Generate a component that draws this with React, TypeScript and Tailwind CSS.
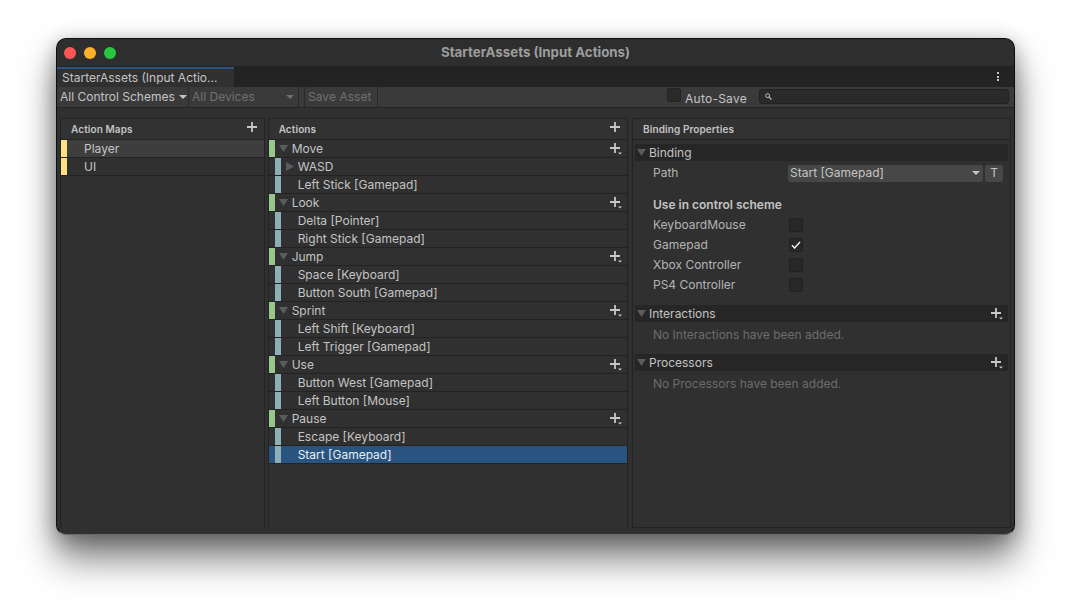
import React from "react";

const font = { fontFamily: "Inter, 'Liberation Sans', sans-serif" };

function Tri({ color = "#5c5c5c" }: { color?: string }) {
  return (
    <svg width="9" height="7" viewBox="0 0 9 7" className="shrink-0">
      <path d="M0 0H9L4.500 7Z" fill={color} />
    </svg>
  );
}

function TriRight() {
  return (
    <svg width="8" height="9" viewBox="0 0 8 9" className="shrink-0">
      <path d="M0 0V9L8 4.500Z" fill="#5c5c5c" />
    </svg>
  );
}

function DropTri({ color = "#c4c4c4", w = 8 }: { color?: string; w?: number }) {
  return (
    <svg width={w} height="4" viewBox="0 0 8 4" className="shrink-0" preserveAspectRatio="none">
      <path d="M0 0H8L4 4Z" fill={color} />
    </svg>
  );
}

function PlusMenu() {
  return (
    <svg width="12" height="12" viewBox="0 0 12 12" className="shrink-0">
      <path d="M5 0v10M0 5h10" stroke="#c8c8c8" strokeWidth="1.800" fill="none" />
      <path d="M8 9.500h4l-2 2z" fill="#c8c8c8" />
    </svg>
  );
}

function Plus() {
  return (
    <svg width="10" height="10" viewBox="0 0 10 10" className="shrink-0">
      <path d="M5 0v10M0 5h10" stroke="#c8c8c8" strokeWidth="1.800" fill="none" />
    </svg>
  );
}

function PanelHeader({ title, plus }: { title: string; plus?: boolean }) {
  return (
    <div className="h-[21px] shrink-0 flex items-center justify-between pl-[10px] pr-[7px] border-b border-[#232323] bg-[#323232]">
      <span className="text-[10px] font-semibold text-[#c4c4c4] tracking-[0.1px]">{title}</span>
      {plus && <div className="-mt-[4px]"><Plus /></div>}
    </div>
  );
}

function MapRow({ label, active }: { label: string; active?: boolean }) {
  return (
    <div className={`h-[18px] flex items-stretch border-b border-[#232323] ${active ? "bg-[#3e3e3e]" : ""}`}>
      <div className="w-[6px] bg-[#ffe083]" />
      <span className="ml-[17px] text-[12px] leading-[18px] text-[#c4c4c4]">{label}</span>
    </div>
  );
}

function ActionRow({ label }: { label: string }) {
  return (
    <div className="h-[18px] flex items-center border-b border-[#232323]">
      <div className="w-[6px] self-stretch bg-[#97c78b]" />
      <div className="ml-[4px] w-[9px] flex -mt-[1px]"><Tri /></div>
      <span className="ml-[4px] flex-1 text-[12px] text-[#c4c4c4]">{label}</span>
      <div className="mr-[5px] flex"><PlusMenu /></div>
    </div>
  );
}

function BindRow({ label, sel, arrow }: { label: string; sel?: boolean; arrow?: boolean }) {
  return (
    <div className={`h-[18px] flex items-center border-b border-[#232323] pl-[6px] ${sel ? "bg-[#2a5480]" : ""}`}>
      <div className="w-[6px] self-stretch bg-[#8cb0b6]" />
      <div className="w-[11px] pl-[5px] flex shrink-0">{arrow && <TriRight />}</div>
      <span className={`ml-[6px] text-[12px] ${sel ? "text-[#e6eef6]" : "text-[#c4c4c4]"}`}>{label}</span>
    </div>
  );
}

function SectionHeader({ label, plus }: { label: string; plus?: boolean }) {
  return (
    <div className="h-[17px] flex items-center bg-[#262626] pl-[2px] pr-[5px]">
      <Tri />
      <span className="ml-[3px] flex-1 text-[12px] text-[#c4c4c4]">{label}</span>
      {plus && <PlusMenu />}
    </div>
  );
}

function CheckRow({ label, checked }: { label: string; checked?: boolean }) {
  return (
    <div className="h-[20px] flex items-center pl-[18px]">
      <span className="w-[136px] text-[12px] text-[#b4b4b4]">{label}</span>
      <div className="w-[14px] h-[14px] rounded-[2px] bg-[#282828] border border-[#212121] flex items-center justify-center">
        {checked && (
          <svg width="10" height="8" viewBox="0 0 10 8">
            <path d="M1 4.200 3.600 7 9 1" stroke="#ededed" strokeWidth="1.500" fill="none" />
          </svg>
        )}
      </div>
    </div>
  );
}

export default function App() {
  return (
    <div className="w-[1071px] h-[609px] bg-white overflow-hidden pt-[38px] pl-[56px]" style={font}>
      <div className="w-[959px] h-[497px] rounded-[10px] overflow-hidden flex flex-col bg-[#303030] border border-[#0e0e0e] border-b-[#6a6a6a] shadow-[0_24px_36px_rgba(0,0,0,0.5),0_4px_20px_rgba(0,0,0,0.3)]">
        {/* title bar */}
        <div className="h-[27px] shrink-0 bg-[#2e2e2e] grid grid-cols-[1fr_auto_1fr] items-center">
          <div className="flex gap-[8px] pl-[7px]">
            <div className="w-[12px] h-[12px] rounded-full bg-[#fd5753]" />
            <div className="w-[12px] h-[12px] rounded-full bg-[#fdb12a]" />
            <div className="w-[12px] h-[12px] rounded-full bg-[#27c73f]" />
          </div>
          <span className="text-[13.300px] font-bold text-[#9d9d9d]">StarterAssets (Input Actions)</span>
          <div />
        </div>
        {/* tab bar */}
        <div className="h-[21px] shrink-0 bg-[#232323] flex items-stretch justify-between">
          <div className="w-[177px] mt-[1px] bg-[#303030] border-t-2 border-[#2a5480] pl-[5px] text-[12px] leading-[17px] text-[#c4c4c4] whitespace-nowrap">
            StarterAssets (Input Actio...
          </div>
          <div className="w-[4px] mr-[14px] flex flex-col items-center justify-center gap-[1.500px]">
            <div className="w-[2px] h-[2px] bg-[#c4c4c4]" />
            <div className="w-[2px] h-[2px] bg-[#c4c4c4]" />
            <div className="w-[2px] h-[2px] bg-[#c4c4c4]" />
          </div>
        </div>
        {/* toolbar */}
        <div className="h-[21px] shrink-0 bg-[#3a3a3a] border-b border-[#232323] flex items-stretch text-[12px] whitespace-nowrap">
          <div className="w-[132px] flex items-center pl-[3px] border-r border-[#2a2a2a] text-[#c4c4c4]">
            <span>All Control Schemes</span>
            <div className="ml-[4px] flex"><DropTri w={8} /></div>
          </div>
          <div className="w-[110px] flex items-center justify-between pl-[3px] pr-[4px] border-r border-[#2a2a2a] text-[#707070]">
            <span>All Devices</span>
            <DropTri color="#707070" />
          </div>
          <div className="ml-[5px] w-[74px] flex items-center pl-[3px] border-x border-[#2a2a2a] text-[#707070] tracking-[0.05px]">
            Save Asset
          </div>
          <div className="flex-1" />
          <div className="w-[14px] h-[14px] mt-[1px] rounded-[2px] bg-[#2a2a2a] border border-[#232323]" />
          <span className="ml-[4px] w-[74px] text-[#c4c4c4] leading-[23px] tracking-[0.25px]">Auto-Save</span>
          <div className="w-[250px] h-[15px] mt-[2px] mr-[5px] rounded-[3px] bg-[#2a2a2a] border border-[#212121] flex items-center pl-[5px]">
            <svg width="7" height="7" viewBox="0 0 8 8">
              <circle cx="3" cy="3" r="2.200" stroke="#c4c4c4" strokeWidth="1.100" fill="none" />
              <path d="M4.700 4.700 7.500 7.500" stroke="#c4c4c4" strokeWidth="1.300" />
            </svg>
          </div>
        </div>
        {/* panels */}
        <div className="flex-1 min-h-0 flex pl-[3px] pr-[3px] pt-[10px] pb-[6px]">
          <div className="w-[205px] flex flex-col border border-[#232323] border-b-0">
            <PanelHeader title="Action Maps" plus />
            <MapRow label="Player" active />
            <MapRow label="UI" />
          </div>
          <div className="w-[361px] ml-[3px] flex flex-col border border-[#232323] border-b-0">
            <PanelHeader title="Actions" plus />
            <ActionRow label="Move" />
            <BindRow label="WASD" arrow />
            <BindRow label="Left Stick [Gamepad]" />
            <ActionRow label="Look" />
            <BindRow label="Delta [Pointer]" />
            <BindRow label="Right Stick [Gamepad]" />
            <ActionRow label="Jump" />
            <BindRow label="Space [Keyboard]" />
            <BindRow label="Button South [Gamepad]" />
            <ActionRow label="Sprint" />
            <BindRow label="Left Shift [Keyboard]" />
            <BindRow label="Left Trigger [Gamepad]" />
            <ActionRow label="Use" />
            <BindRow label="Button West [Gamepad]" />
            <BindRow label="Left Button [Mouse]" />
            <ActionRow label="Pause" />
            <BindRow label="Escape [Keyboard]" />
            <BindRow label="Start [Gamepad]" sel />
          </div>
          <div className="flex-1 ml-[4px] flex flex-col border border-[#232323]">
            <PanelHeader title="Binding Properties" />
            <div className="pt-[4px] px-[2px] flex flex-col">
              <SectionHeader label="Binding" />
              <div className="h-[18px] mt-[3px] flex items-center pl-[18px] pr-[5px]">
                <span className="w-[135px] text-[12px] text-[#b4b4b4]">Path</span>
                <div className="w-[195px] h-[17px] rounded-[2px] bg-[#474747] flex items-center justify-between pl-[2px] pr-[3px]">
                  <span className="text-[12px] text-[#c4c4c4]">Start [Gamepad]</span>
                  <DropTri />
                </div>
                <div className="w-[18px] h-[17px] ml-[2px] rounded-[2px] bg-[#474747] flex items-center justify-center text-[12px] text-[#c4c4c4]">T</div>
              </div>
              <div className="mt-[14px] pl-[18px] h-[18px] text-[12px] font-semibold leading-[18px] text-[#c4c4c4]">Use in control scheme</div>
              <div className="mt-[1px]">
                <CheckRow label="KeyboardMouse" />
                <CheckRow label="Gamepad" checked />
                <CheckRow label="Xbox Controller" />
                <CheckRow label="PS4 Controller" />
              </div>
              <div className="mt-[10px]"><SectionHeader label="Interactions" plus /></div>
              <div className="h-[32px] pl-[18px] pt-[4px] text-[12px] leading-[18px] text-[#6c6c6c]">No Interactions have been added.</div>
              <SectionHeader label="Processors" plus />
              <div className="h-[32px] pl-[18px] pt-[4px] text-[12px] leading-[18px] text-[#6c6c6c]">No Processors have been added.</div>
            </div>
          </div>
        </div>
      </div>
    </div>
  );
}
